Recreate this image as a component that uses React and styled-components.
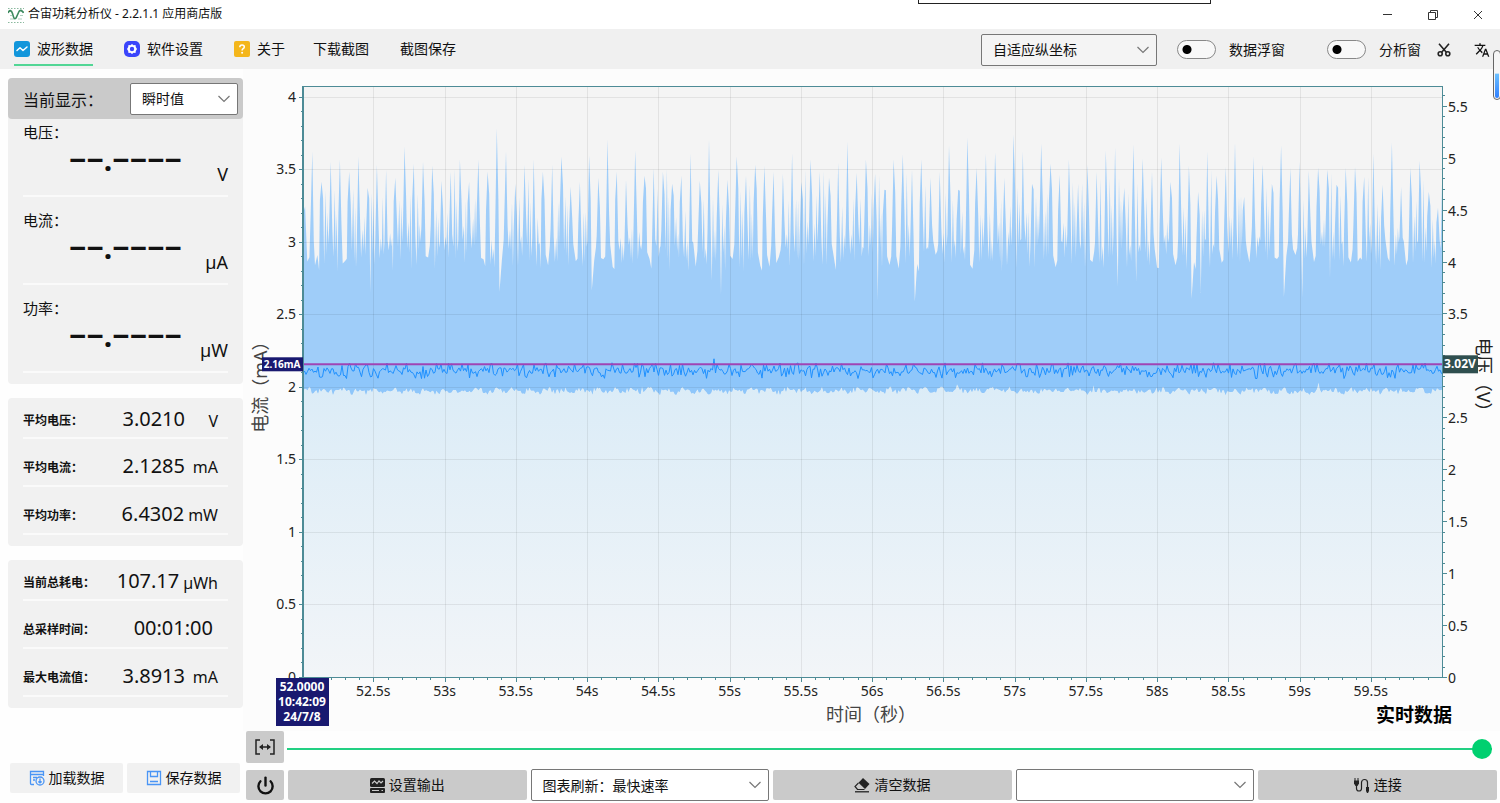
import React, { useLayoutEffect, useMemo, useRef, useState } from "react";
import styled, { createGlobalStyle, css } from "styled-components";
import { MdTranslate } from "react-icons/md";
import { Power } from "lucide-react";

const GlobalStyle = createGlobalStyle`
  * { box-sizing: border-box; }
  body {
    margin: 0;
    background: #fefefe;
    color: #111;
    font-family: "Noto Sans", "Noto Sans CJK SC", sans-serif;
    font-size: 14px;
  }
  button, select, input { font: inherit; color: inherit; margin: 0; }
`;

/* ---------- shell ---------- */

const Window = styled.div`
  position: relative;
  min-height: 100vh;
  display: flex;
  flex-direction: column;
  overflow: hidden;
`;

const TitleBar = styled.header`
  height: 29px;
  display: flex;
  align-items: center;
  padding-left: 8px;
  gap: 4px;
  background: #fff;
`;

const Title = styled.h1`
  flex: 1;
  margin: 0;
  font-size: 12px;
  font-weight: 400;
  line-height: 18px;
  margin-bottom: 2px;
`;

const WindowButton = styled.button`
  width: 45px;
  height: 29px;
  padding: 0;
  border: 0;
  background: none;
  display: grid;
  place-items: center;
`;

const DockedPanel = styled.div`
  position: absolute;
  top: 0;
  left: 918px;
  width: 293px;
  height: 4px;
  border: 1px solid #222;
  border-top: 0;
  background: #fff;
`;

const LevelGauge = styled.div`
  position: absolute;
  top: 50px;
  right: -1px;
  width: 8px;
  height: 50px;
  padding: 1px;
  border: 1px solid #666;
  border-radius: 4px;
  background: linear-gradient(transparent 46%, #6cc0ff 48%, #2f80ff) content-box, #f6f6f6;
`;

/* ---------- toolbar ---------- */

const Toolbar = styled.div`
  height: 40px;
  display: flex;
  align-items: center;
  justify-content: space-between;
  padding: 1px 10px 0 14px;
  background: #f0f0f0;
`;

const Group = styled.div`
  display: flex;
  align-items: center;
  gap: ${(p) => p.$gap}px;
`;

const NavButton = styled.button`
  height: 32px;
  padding: 0;
  border: 0;
  background: none;
  display: flex;
  align-items: center;
  gap: 7px;
  line-height: 20px;
  border-bottom: 2px solid ${(p) => (p.$active ? "#52d695" : "transparent")};
  white-space: nowrap;
`;

const IconButton = styled.button`
  padding: 0;
  border: 0;
  background: none;
  display: flex;
`;

const SwitchLabel = styled.label`
  display: flex;
  align-items: center;
  gap: 13px;
  line-height: 20px;
  white-space: nowrap;
`;

const SwitchInput = styled.input`
  appearance: none;
  width: 39px;
  height: 19px;
  border: 1px solid #888;
  border-radius: 10px;
  background: radial-gradient(circle at 9px 50%, #000 4px, transparent 5px) #f8f8f8;
  &:checked {
    background: radial-gradient(circle at 28px 50%, #fff 4px, transparent 5px) #00d070;
  }
`;

/* ---------- form parts ---------- */

const SelectFrame = styled.div`
  display: grid;
  align-items: center;
  > * { grid-area: 1 / 1; }
  > svg { justify-self: end; margin-right: 8px; pointer-events: none; }
  ${(p) => (p.$width ? css`width: ${p.$width}px;` : css`flex: 1 1 0; min-width: 0;`)}
`;

const SelectBox = styled.select`
  appearance: none;
  width: 100%;
  height: 32px;
  padding: 0 28px 0 11px;
  border: 1px solid #777;
  border-radius: 2px;
  background: ${(p) => (p.$muted ? "#f4f4f4" : "#fff")};
  color: #111;
  font-size: 14px;
`;

function Select({ label, options, width, muted }) {
  return (
    <SelectFrame $width={width}>
      <SelectBox aria-label={label} $muted={muted}>
        {options.map((o) => (
          <option key={o}>{o}</option>
        ))}
      </SelectBox>
      <svg width="12" height="8" viewBox="0 0 12 8" fill="none" stroke="#777" strokeWidth="1.2">
        <path d="M.5 1 6 6.500 11.500 1" />
      </svg>
    </SelectFrame>
  );
}

const ActionButton = styled.button`
  ${(p) => (p.$square ? css`flex: 0 0 38px;` : css`flex: 1 1 0; min-width: 0;`)}
  height: ${(p) => p.$height || 30}px;
  padding: 0;
  border: 0;
  border-radius: 2px;
  background: ${(p) => (p.$light ? "#f1f1f1" : "#cacaca")};
  display: flex;
  align-items: center;
  justify-content: center;
  gap: 4px;
  line-height: 20px;
`;

/* ---------- sidebar ---------- */

const Body = styled.div`
  flex: 1;
  display: flex;
`;

const Sidebar = styled.aside`
  flex: 0 0 243px;
  display: flex;
  flex-direction: column;
  gap: 14px;
  padding: 9px 0 10px 8px;
`;

const Card = styled.section`
  border-radius: 4px;
  background: #f1f1f1;
  padding-bottom: 11px;
`;

const CardHeader = styled.div`
  height: 41px;
  display: flex;
  align-items: center;
  justify-content: space-between;
  padding: 0 5px 0 15px;
  border-radius: 4px;
  background: #cacaca;
  font-size: 16px;
`;

const Meter = styled.div`
  margin: 0 15px;
  padding-top: 12px;
  border-bottom: 2px solid #fafafa;
  &:nth-child(2) { padding-top: 2px; }
`;

const MeterLabel = styled.div`
  font-size: 15px;
  line-height: 22px;
`;

const MeterValue = styled.div`
  height: 52px;
  padding-top: 1px;
  display: flex;
  justify-content: flex-end;
  align-items: flex-start;
`;

const Digits = styled.span`
  font-size: 30px;
  font-weight: 700;
  line-height: 32px;
`;

const MeterUnit = styled.span`
  width: 46px;
  padding-top: 18px;
  text-align: right;
  font-size: 18px;
  line-height: 24px;
`;

const Stat = styled.div`
  height: 41px;
  margin: 0 15px;
  padding-right: 10px;
  display: flex;
  align-items: center;
  border-bottom: 2px solid #fafafa;
  & + & { margin-top: 7px; }
  &:first-child { padding-top: 3px; }
`;

const StatLabel = styled.span`
  flex: 1;
  font-size: 12px;
  font-weight: 700;
  white-space: nowrap;
  padding-top: 2px;
`;

const StatValue = styled.span`
  font-size: 20px;
  line-height: 28px;
  padding-right: ${(p) => (p.$alone ? 5 : 0)}px;
`;

const StatUnit = styled.span`
  min-width: 33px;
  padding: 3px 0 0 4px;
  text-align: right;
  font-size: 16px;
  line-height: 24px;
`;

const SidebarActions = styled.div`
  margin-top: auto;
  padding: 0 3px 0 2px;
  display: flex;
  gap: 4px;
`;

/* ---------- main area ---------- */

const Main = styled.main`
  flex: 1;
  min-width: 0;
  display: flex;
  flex-direction: column;
`;

const ChartArea = styled.div`
  flex: 1 1 0;
  min-height: 400px;
  background: #fcfcfc;
  svg { display: block; width: 100%; height: 100%; }
`;

const SliderRow = styled.div`
  display: flex;
  align-items: center;
  gap: 3px;
  padding: 0 8px 0 3px;
`;

const Range = styled.input`
  appearance: none;
  flex: 1;
  min-width: 0;
  height: 32px;
  background: linear-gradient(#22d083, #22d083) 0 17px / 100% 2px no-repeat;
  &::-webkit-slider-thumb {
    appearance: none;
    width: 20px;
    height: 20px;
    border-radius: 50%;
    background: #00d070;
    margin-top: 3px;
  }
`;

const BottomRow = styled.div`
  display: flex;
  align-items: center;
  gap: 4px;
  padding: 6px 3px 2px 3px;
`;

/* ---------- icons ---------- */

const LogoIcon = () => (
  <svg width="16" height="16" viewBox="0 0 16 16" fill="none" stroke="#3d8a5f">
    <path d="M0 1.500H16M0 15.500H16" strokeDasharray="1.500 1.500" opacity=".6" />
    <path d="M0 4.500h3M12 4.500h4M2 8.500h2M12 8.500h3M2 12h4M10 12h4" strokeWidth=".8" opacity=".5" />
    <path d="M0 6C1.500 2.500 3.500 3 4.500 6.500s1.500 6.500 3.500 4.500L11 4.500c1.200-2 3-1.500 4.500 1.500" strokeWidth="1.600" />
  </svg>
);

const WaveIcon = () => (
  <svg width="16" height="16" viewBox="0 0 16 16">
    <rect width="16" height="16" rx="3" fill="#1296db" />
    <path d="M3 9.500 6 6.800l3 2.700 4-3.500" fill="none" stroke="#fff" strokeWidth="1.500" strokeLinecap="round" strokeLinejoin="round" />
  </svg>
);

const SettingsIcon = () => (
  <svg width="16" height="16" viewBox="0 0 16 16">
    <rect width="16" height="16" rx="5" fill="#3b45fb" />
    <path d="M8 3l1.500 1.200 2-.2.3 2L13 8l-1.200 2-.3 2-2-.2L8 13l-1.500-1.200-2 .2-.3-2L3 8l1.200-2 .3-2 2 .2z" fill="#fff" />
    <circle cx="8" cy="8" r="2.200" fill="#3b45fb" />
  </svg>
);

const HelpIcon = () => (
  <svg width="16" height="16" viewBox="0 0 16 16">
    <rect width="16" height="16" rx="2" fill="#f4b61b" />
    <path d="M5.800 6.200c0-3 4.500-2.800 4.500-.2 0 1.700-2.200 1.700-2.200 3.400" fill="none" stroke="#fff" strokeWidth="1.500" />
    <circle cx="8.100" cy="11.800" r="1" fill="#fff" />
  </svg>
);

const ScissorsIcon = () => (
  <svg width="14" height="14" viewBox="0 0 14 14" fill="none" stroke="#222" strokeWidth="1.600">
    <path d="M2 .8 9.300 9.200M12 .8 4.700 9.200" />
    <circle cx="3.200" cy="10.800" r="2" />
    <circle cx="10.800" cy="10.800" r="2" />
  </svg>
);

const LoadIcon = () => (
  <svg width="16" height="16" viewBox="0 0 16 16" fill="none" stroke="#4a95f5" strokeWidth="1.300">
    <path d="M5 14.500H2.500a1 1 0 0 1-1-1v-12h13V6M1.500 4.500h13M4 7.500h4M4 10h2" />
    <circle cx="11" cy="11" r="4" />
    <path d="M11 8.500v4.500M9.300 11.500 11 13l1.700-1.500" />
  </svg>
);

const SaveIcon = () => (
  <svg width="16" height="16" viewBox="0 0 16 16" fill="none" stroke="#4a95f5" strokeWidth="1.300">
    <path d="M1.500 1.500h13v13h-13zM4.500 1.500v5h7v-5M4 11.500h8" />
  </svg>
);

const FitIcon = () => (
  <svg width="20" height="16" viewBox="0 0 20 16" fill="none" stroke="#222" strokeWidth="1.500">
    <path d="M5 1H1v14h4M15 1h4v14h-4M5 8h10" />
    <path d="M4 8l4-3v6zM16 8l-4-3v6z" fill="#222" stroke="none" />
  </svg>
);

const OutputIcon = () => (
  <svg width="15" height="15" viewBox="0 0 15 15">
    <rect width="15" height="9" rx="1.500" fill="#222" />
    <rect y="10" width="15" height="5" rx="1" fill="#222" />
    <path d="M2 5.500 4.500 3 7 5.500 9 3l2 2 2-2" fill="none" stroke="#cacaca" strokeWidth="1.200" />
    <path d="M2 12.500h7M11.500 12.500h1.500" stroke="#cacaca" strokeWidth="1.200" />
  </svg>
);

const EraserIcon = () => (
  <svg width="16" height="15" viewBox="0 0 16 15">
    <path d="M9 0 15.500 6 11 11 4.500 4.800z" fill="#222" />
    <path d="M4.500 4.800 1 8.500 3.500 11.500H10.500" fill="none" stroke="#222" strokeWidth="1.200" />
    <path d="M1 13.800h14" stroke="#222" strokeWidth="1.300" />
  </svg>
);

const PlugIcon = () => (
  <svg width="16" height="15" viewBox="0 0 16 15">
    <path d="M1 0v3M4 0v3" stroke="#222" />
    <path d="M0 2.500h5v3L3.500 8h-2L0 5.500z" fill="#222" />
    <path d="M2.500 8v2.500a2.500 2.500 0 0 0 5 0v-6a3 3 0 0 1 6 0V9" fill="none" stroke="#222" strokeWidth="1.200" />
    <path d="M12 9h3v4l-1 2h-1l-1-2z" fill="#222" />
  </svg>
);

/* ---------- chart ---------- */

const T0 = 52;
const T1 = 60;
const MA_MAX = 4.08;
const V_MAX = 5.7;
const COUNTS_PER_MA = 145;

const PEAK_COUNTS = [
  526, 496, 516, 518, 506, 521, 490, 513, 508, 500, 531, 514, 516, 512, 497, 506, 518, 496, 518, 506, 549, 526, 494, 513, 518,
  506, 513, 521, 491, 496, 522, 500, 538, 506, 498, 527, 502, 510, 506, 494, 502, 524, 497, 538, 508, 498, 521, 502, 513, 512,
  506, 504, 524, 496, 518, 506, 500, 515, 536, 505, 518, 504, 488, 518, 523, 508, 518, 500, 506, 532, 488, 540, 510, 524, 525,
  500, 543, 526, 494, 534, 514, 503, 518, 494, 513, 506, 527, 530, 490, 533, 519, 506, 520, 496, 534, 512, 486, 526, 502, 511,
  535, 481, 521, 513, 494, 532, 510, 516, 507, 510, 508, 493, 510, 511, 501, 524, 493, 535, 491, 510, 517, 486, 470,
];

function makeRandom(seed) {
  let s = seed;
  return () => {
    s = (s * 1664525 + 1013904223) % 4294967296;
    return s / 4294967296;
  };
}

function buildSignals() {
  const rnd = makeRandom(20240708);
  const step = 7.9 / (PEAK_COUNTS.length - 1);
  const upper = [[T0, 3.2], [T0 + 0.015, 3.25], [T0 + 0.03, 2.87], [T0 + 0.045, 2.9]];
  PEAK_COUNTS.forEach((count, i) => {
    const t = T0 + 0.065 + i * step;
    const peak = count / COUNTS_PER_MA;
    const deep = rnd() < 0.13 ? 0.24 : 0;
    upper.push([t - 0.011, 2.98 + rnd() * 0.32]);
    upper.push([t, peak]);
    upper.push([t + 0.011, 3.0 + rnd() * 0.4]);
    upper.push([t + 0.019, 2.82 + rnd() * 0.2 - deep]);
    if (rnd() > 0.3) {
      upper.push([t + 0.028, 3.02 + rnd() * 0.5]);
      upper.push([t + 0.035, 2.85 + rnd() * 0.15]);
      upper.push([t + 0.042, 2.95 + rnd() * 0.4]);
    } else {
      upper.push([t + 0.036, 2.82 + rnd() * 0.1]);
    }
    upper.push([t + 0.048, 2.8 + rnd() * 0.22]);
  });
  upper.push([T1, 2.95]);
  const lower = [];
  const average = [];
  const count = 760;
  for (let i = 0; i <= count; i += 1) {
    const t = T0 + ((T1 - T0) * i) / count;
    lower.push([t, 1.98 + Math.sin(i * 0.55) * 0.01 + (rnd() - 0.5) * 0.04 + (rnd() > 0.985 ? 0.03 : 0)]);
    average.push([t, 2.118 + (rnd() - 0.5) * (rnd() > 0.45 ? 0.11 : 0.04) + (rnd() > 0.992 ? 0.04 : 0)]);
  }
  return { upper: upper.filter(([t]) => t <= T1), lower, average };
}

const steps = (from, to, by) =>
  Array.from({ length: Math.round((to - from) / by) + 1 }, (_, i) => Math.round((from + i * by) * 10) / 10);

function Chart() {
  const ref = useRef(null);
  const [size, setSize] = useState({ w: 1257, h: 662 });
  useLayoutEffect(() => {
    const measure = () => {
      const r = ref.current.getBoundingClientRect();
      setSize({ w: Math.round(r.width), h: Math.round(r.height) });
    };
    measure();
    const observer = new ResizeObserver(measure);
    observer.observe(ref.current);
    return () => observer.disconnect();
  }, []);

  const signals = useMemo(buildSignals, []);
  const left = 60;
  const top = 17;
  const right = size.w - 57;
  const bottom = size.h - 53;
  const x = (t) => left + ((t - T0) / (T1 - T0)) * (right - left);
  const yA = (a) => bottom - (a / MA_MAX) * (bottom - top);
  const yV = (v) => bottom - (v / V_MAX) * (bottom - top);
  const line = (pts) => pts.map(([t, a]) => `${x(t).toFixed(1)},${yA(a).toFixed(1)}`).join(" ");
  const base = `${right},${bottom} ${left},${bottom}`;
  const upper = line(signals.upper);
  const lower = line(signals.lower);
  const lowerBack = line([...signals.lower].reverse());
  const level = 2.162;
  const mark = [[T0, level], [T1, level]];

  return (
    <ChartArea ref={ref}>
      <svg role="img" aria-label="电流电压波形" fontSize="14" fill="#222">
        <defs>
          <linearGradient id="below" x1="0" y1="0" x2="0" y2="1">
            <stop offset="0" stopColor="#dbecf7" />
            <stop offset="1" stopColor="#f2f5f8" />
          </linearGradient>
        </defs>
        <rect x={left} y={top} width={right - left} height={bottom - top} fill="#f4f4f4" />
        <polygon points={`${lower} ${base}`} fill="url(#below)" />
        <polygon points={`${upper} ${lowerBack}`} fill="#9fcdf9" />
        <polygon points={`${line(mark)} ${lowerBack}`} fill="#8ec6fa" />

        <g stroke="#000" strokeOpacity=".07">
          {steps(0.5, 4, 0.5).map((a) => (
            <line key={a} x1={left} x2={right} y1={Math.round(yA(a)) - 0.5} y2={Math.round(yA(a)) - 0.5} />
          ))}
          {steps(52.5, 59.5, 0.5).map((t) => (
            <line key={t} y1={top} y2={bottom} x1={Math.round(x(t)) - 0.5} x2={Math.round(x(t)) - 0.5} />
          ))}
        </g>

        <polyline points={line(signals.average)} fill="none" stroke="#1e90ff" />
        <polyline points={line(mark)} fill="none" stroke="#a044b4" strokeWidth="2" />

        <g fill="none" stroke="#4d8b96">
          <path d={`M${left} ${top + 0.5}H${right}M${left} ${bottom - 0.5}H${right}M${right - 0.5} ${top}V${bottom}`} />
          <path d={`M${left} ${top}V${bottom}`} strokeWidth="2" />
          {steps(0, 4, 0.1).map((a) => (
            <path key={a} d={`M${left} ${Math.round(yA(a)) - 0.5}h${(a * 10) % 5 === 0 ? -4 : -2}`} />
          ))}
          {steps(0, 5.6, 0.1).map((v) => (
            <path key={v} d={`M${right} ${Math.round(yV(v)) - 0.5}h${(v * 10) % 5 === 0 ? 4 : 2}`} />
          ))}
          {steps(52, 59.9, 0.1).map((t) => (
            <path key={t} d={`M${Math.round(x(t)) - 0.5} ${bottom}v${(t * 10) % 5 === 0 ? 4 : 2}`} />
          ))}
        </g>

        {steps(0, 4, 0.5).map((a) => (
          <text key={a} x={left - 7} y={yA(a) + 4} textAnchor="end">{a}</text>
        ))}
        {steps(0, 5.5, 0.5)
          .filter((v) => v !== 3)
          .map((v) => (
            <text key={v} x={right + 5} y={yV(v) + 5}>{v}</text>
          ))}
        {steps(52.5, 59.5, 0.5).map((t) => (
          <text key={t} x={x(t) - 1} y={bottom + 18} textAnchor="middle">{`${t}s`}</text>
        ))}

        <g fontSize="18">
          <text x={(left + right) / 2 - 2} y={bottom + 43} textAnchor="middle" fill="#444">时间（秒）</text>
          <text transform={`translate(24 ${yA(2) + 45}) rotate(-90)`} fill="#444">电流（mA）</text>
          <text transform={`translate(${right + 34} ${yA(2) - 50}) rotate(90)`}>电压（V）</text>
        </g>
        <text x={right + 9} y={bottom + 44} fontSize="19" fontWeight="700" textAnchor="end" fill="#000">实时数据</text>

        <g fontWeight="700" textAnchor="middle">
          <rect x={left - 41} y={yA(level) - 7} width="41" height="14" fill="#191970" />
          <text x={left - 21} y={yA(level) + 4} fontSize="10" fill="#fff">2.16mA</text>
          <rect x={right} y={yA(level) - 9} width="35" height="18" fill="#2f4f4f" />
          <text x={right + 17} y={yA(level) + 4} fontSize="12" fill="#fff">3.02V</text>
          <rect x={left - 27} y={bottom} width="53" height="48" fill="#191970" />
          {["52.0000", "10:42:09", "24/7/8"].map((s, i) => (
            <text key={s} x={left - 1} y={bottom + 13 + i * 15} fontSize="12" fill="#fff">{s}</text>
          ))}
        </g>
      </svg>
    </ChartArea>
  );
}

/* ---------- page ---------- */

const METERS = [
  ["电压：", "V"],
  ["电流：", "µA"],
  ["功率：", "µW"],
];

const AVERAGES = [
  ["平均电压：", "3.0210", "V"],
  ["平均电流：", "2.1285", "mA"],
  ["平均功率：", "6.4302", "mW"],
];

const TOTALS = [
  ["当前总耗电：", "107.17", "µWh"],
  ["总采样时间：", "00:01:00", null],
  ["最大电流值：", "3.8913", "mA"],
];

function StatCard({ rows }) {
  return (
    <Card>
      {rows.map(([label, value, unit]) => (
        <Stat key={label}>
          <StatLabel>{label}</StatLabel>
          <StatValue $alone={!unit}>{value}</StatValue>
          {unit && <StatUnit>{unit}</StatUnit>}
        </Stat>
      ))}
    </Card>
  );
}

export default function App() {
  return (
    <Window>
      <GlobalStyle />
      <TitleBar>
        <LogoIcon />
        <Title>合宙功耗分析仪 - 2.2.1.1 应用商店版</Title>
        <Group $gap={0}>
          <WindowButton aria-label="最小化">
            <svg width="10" height="10" fill="none" stroke="#333"><path d="M0 4.500h9" /></svg>
          </WindowButton>
          <WindowButton aria-label="还原">
            <svg width="10" height="10" fill="none" stroke="#333"><path d="M.5 2.500h7v7h-7zM2.500 2.500v-2h7v7h-2" /></svg>
          </WindowButton>
          <WindowButton aria-label="关闭">
            <svg width="10" height="10" fill="none" stroke="#333"><path d="M1 1l8 8M9 1 1 9" /></svg>
          </WindowButton>
        </Group>
      </TitleBar>

      <Toolbar>
        <Group as="nav" $gap={28}>
          <Group $gap={31}>
            <NavButton $active><WaveIcon />波形数据</NavButton>
            <NavButton><SettingsIcon />软件设置</NavButton>
            <NavButton><HelpIcon />关于</NavButton>
          </Group>
          <Group $gap={31}>
            <NavButton>下载截图</NavButton>
            <NavButton>截图保存</NavButton>
          </Group>
        </Group>
        <Group $gap={16}>
          <Group $gap={20}>
            <Select label="纵坐标" options={["自适应纵坐标"]} width={176} muted />
            <Group $gap={42}>
              <SwitchLabel><SwitchInput type="checkbox" role="switch" />数据浮窗</SwitchLabel>
              <SwitchLabel><SwitchInput type="checkbox" role="switch" />分析窗</SwitchLabel>
            </Group>
          </Group>
          <Group $gap={23}>
            <IconButton aria-label="截图"><ScissorsIcon /></IconButton>
            <IconButton aria-label="语言"><MdTranslate size={16} /></IconButton>
          </Group>
        </Group>
      </Toolbar>

      <Body>
        <Sidebar>
          <Card>
            <CardHeader>
              <span>当前显示：</span>
              <Select label="当前显示" options={["瞬时值"]} width={108} />
            </CardHeader>
            {METERS.map(([label, unit]) => (
              <Meter key={label}>
                <MeterLabel>{label}</MeterLabel>
                <MeterValue>
                  <Digits>−−.−−−−</Digits>
                  <MeterUnit>{unit}</MeterUnit>
                </MeterValue>
              </Meter>
            ))}
          </Card>
          <StatCard rows={AVERAGES} />
          <StatCard rows={TOTALS} />
          <SidebarActions>
            <ActionButton $light><LoadIcon />加载数据</ActionButton>
            <ActionButton $light><SaveIcon />保存数据</ActionButton>
          </SidebarActions>
        </Sidebar>

        <Main>
          <Chart />
          <SliderRow>
            <ActionButton $square $height={32} aria-label="适应宽度"><FitIcon /></ActionButton>
            <Range type="range" min="0" max="100" defaultValue="100" aria-label="时间位置" />
          </SliderRow>
          <BottomRow>
            <ActionButton $square aria-label="电源"><Power size={19} strokeWidth={3} /></ActionButton>
            <ActionButton><OutputIcon />设置输出</ActionButton>
            <Select label="图表刷新" options={["图表刷新：最快速率"]} />
            <ActionButton><EraserIcon />清空数据</ActionButton>
            <Select label="端口" options={[""]} />
            <ActionButton><PlugIcon />连接</ActionButton>
          </BottomRow>
        </Main>
      </Body>
      <DockedPanel />
      <LevelGauge />
    </Window>
  );
}
